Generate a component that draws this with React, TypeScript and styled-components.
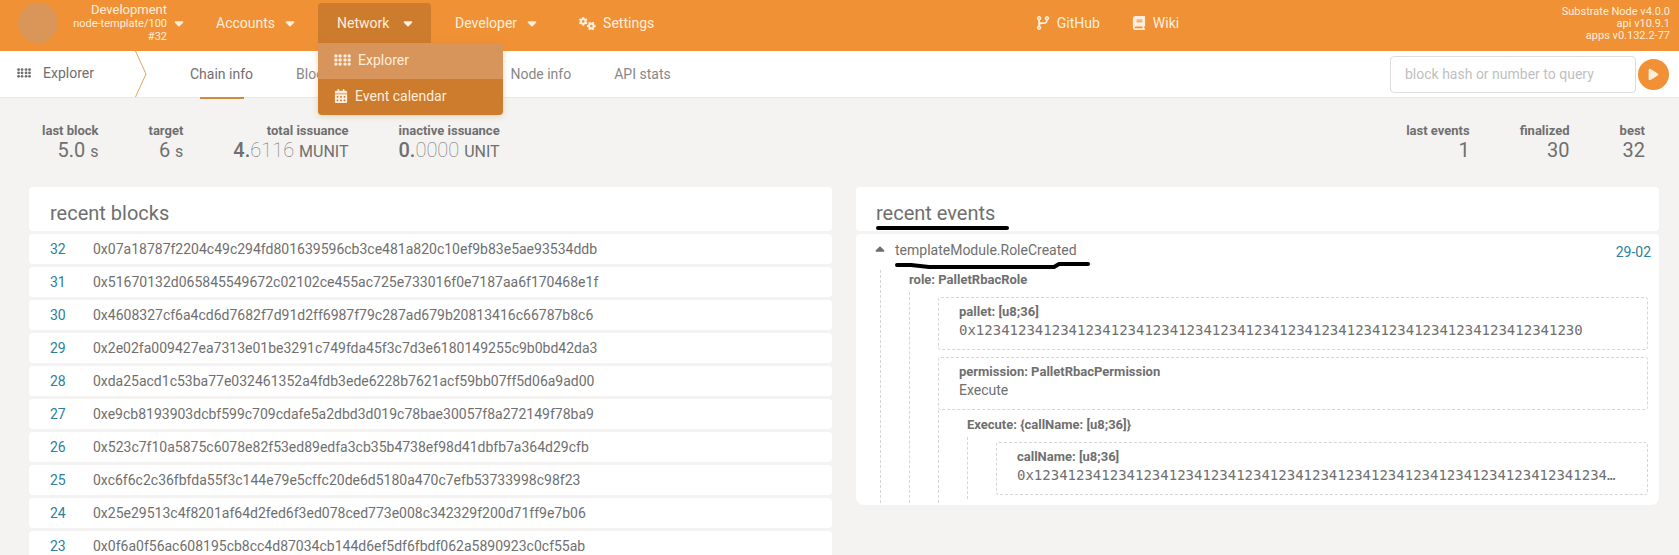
import React from "react";
import styled, { createGlobalStyle } from "styled-components";
import {
  FaBook,
  FaCalendarDays,
  FaCaretDown,
  FaCaretUp,
  FaCodeBranch,
  FaGears,
  FaPlay,
} from "react-icons/fa6";

const orange = "#f19135";
const orangeDark = "#cd7b2d";
const text = "#6f6f6f";
const link = "#2d7f9d";
const cream = "#ffeedd";
const dash = "#d6d6d6";

const GlobalStyle = createGlobalStyle`
  * { box-sizing: border-box; }
  html { background: #f4f3f1; }
  body {
    margin: 0;
    overflow: hidden;
    color: ${text};
    font: 14px/20px Roboto, "Open Sans", sans-serif;
  }
  button, input { font: inherit; color: inherit; }
  a { color: inherit; text-decoration: none; }
`;

const Header = styled.header`
  display: flex;
  align-items: flex-start;
  height: 51px;
  padding: 3px 9px 0 18px;
  background: ${orange};
  color: ${cream};
`;

const ChainButton = styled.button`
  display: flex;
  align-items: center;
  gap: 5px;
  width: 168px;
  padding: 0;
  border: 0;
  background: none;
  text-align: right;
`;

const ChainLogo = styled.span`
  width: 40px;
  height: 40px;
  border-radius: 50%;
  background: #da9658;
`;

const ChainInfo = styled.span`
  display: flex;
  flex: 1;
  flex-direction: column;
  font-size: 11px;
  line-height: 13px;
`;

const ChainName = styled.span`
  margin-bottom: 1px;
  font-size: 13px;
`;

const Menu = styled.nav`
  display: flex;
  gap: 5px;
  margin-left: 11px;
`;

const MenuGroup = styled.div`
  position: relative;
`;

const MenuButton = styled.button<{ $open?: boolean }>`
  display: flex;
  align-items: center;
  justify-content: space-between;
  gap: 8px;
  min-width: 113px;
  height: 40px;
  padding: 0 16px 0 19px;
  border: 0;
  border-radius: 4px 4px 0 0;
  background: ${(p) => (p.$open ? orangeDark : "transparent")};
`;

const MenuLink = styled.a`
  display: flex;
  align-items: center;
  gap: 7px;
  height: 40px;
  padding: 0 13px 0 19px;
`;

const Dropdown = styled.div`
  position: absolute;
  z-index: 2;
  top: 100%;
  left: 0;
  width: 185px;
  overflow: hidden;
  border-radius: 0 0 4px 4px;
  background: ${orangeDark};
  box-shadow: 0 1px 6px rgba(205, 123, 45, 0.3);
`;

const DropdownItem = styled.a<{ $active?: boolean }>`
  display: flex;
  align-items: center;
  gap: 7px;
  height: 36px;
  padding: 0 16px 2px;
  background: ${(p) => (p.$active ? "#d7955b" : "transparent")};
`;

const ExternalLinks = styled.nav`
  display: flex;
  flex: 1;
  justify-content: center;
  padding-right: 20px;
`;

const Versions = styled.div`
  display: flex;
  flex-direction: column;
  padding-top: 3px;
  font-size: 11px;
  line-height: 12px;
  text-align: right;
`;

const TabBar = styled.div`
  display: flex;
  align-items: stretch;
  height: 47px;
  padding: 0 10px 0 17px;
  border-bottom: 1px solid #e8e7e6;
  background: #fff;
`;

const Section = styled.div`
  display: flex;
  align-items: center;
  gap: 12px;
  width: 118px;
  padding-bottom: 2px;
`;

const Tabs = styled.nav`
  display: flex;
  flex: 1;
  gap: 1px;
  padding-left: 22px;
`;

const Tab = styled.a<{ $active?: boolean }>`
  display: flex;
  flex-direction: column;
  justify-content: center;
  position: relative;
  padding: 0 21px;
  color: ${(p) => (p.$active ? text : "#878787")};

  &::after {
    content: "";
    display: ${(p) => (p.$active ? "block" : "none")};
    position: absolute;
    bottom: -2px;
    left: 50%;
    width: 44px;
    height: 2px;
    margin-left: -22px;
    background: #d08b43;
  }
`;

const Search = styled.form`
  display: flex;
  align-items: center;
  gap: 2px;
`;

const SearchInput = styled.input`
  width: 246px;
  height: 37px;
  padding: 0 14px;
  border: 1px solid #dddddd;
  border-radius: 4px;
  outline: 0;
  background: #fff;

  &::placeholder { color: #bfbfbf; }
`;

const SearchButton = styled.button`
  display: flex;
  align-items: center;
  justify-content: center;
  width: 31px;
  height: 31px;
  padding: 0;
  border: 0;
  border-radius: 50%;
  background: ${orange};
  color: ${cream};
`;

const Stats = styled.section`
  display: flex;
  justify-content: space-between;
  padding: 24px 34px 0 42px;
`;

const StatGroup = styled.dl`
  display: flex;
  gap: 50px;
  margin: 0;
`;

const Stat = styled.div`
  text-align: right;
`;

const StatLabel = styled.dt`
  font-size: 13px;
  font-weight: 700;
  line-height: 18px;
`;

const StatValue = styled.dd`
  margin: 0;
  font-size: 20px;
  line-height: 20px;
`;

const Whole = styled.span`
  font-weight: 500;
`;

const Decimals = styled.span`
  font-weight: 100;
`;

const Unit = styled.span`
  font-size: 16px;
`;

const Columns = styled.main`
  display: grid;
  grid-template-columns: repeat(2, minmax(0, 1fr));
  align-items: start;
  gap: 24px;
  padding: 25px 20px 0 29px;
`;

const BlockTable = styled.table`
  width: 100%;
  margin: -3px 0;
  border-collapse: separate;
  border-spacing: 0 3px;
`;

const TableTitle = styled.th`
  height: 44px;
  padding: 7px 21px 0;
  border-radius: 4px;
  background: #fff;
  font-size: 20px;
  font-weight: 400;
  line-height: 24px;
  text-align: left;
`;

const BlockNumber = styled.td`
  width: 64px;
  height: 30px;
  padding: 0 0 0 21px;
  border-radius: 4px 0 0 4px;
  background: #fff;
  color: ${link};
`;

const BlockHash = styled.td`
  padding: 0;
  border-radius: 0 4px 4px 0;
  background: #fff;
`;

const EventPanel = styled.section`
  display: flex;
  flex-direction: column;
  gap: 3px;
`;

const EventTitle = styled.h2`
  position: relative;
  height: 44px;
  margin: 0;
  padding: 14px 20px 0;
  border-radius: 4px;
  background: #fff;
  font-size: 20px;
  font-weight: 400;
  line-height: 24px;
`;

const EventBody = styled.div`
  padding: 6px 11px 2px 21px;
  border-radius: 4px 4px 8px 8px;
  background: #fff;
`;

const EventHeader = styled.div`
  display: flex;
  justify-content: space-between;
  position: relative;
  height: 30px;
  margin: 0 -3px 0 -4px;
`;

const EventToggle = styled.button`
  display: flex;
  align-items: flex-start;
  gap: 8px;
  padding: 0;
  border: 0;
  background: none;

  svg { margin-top: 3px; }
`;

const EventTime = styled.a`
  padding-top: 2px;
  color: ${link};
`;

const TitleMark = styled.svg`
  position: absolute;
  top: 36px;
  left: 19px;
`;

const NameMark = styled.svg`
  position: absolute;
  top: 21px;
  left: 20px;
`;

const Tree = styled.div`
  margin-left: 3px;
  padding-left: 28px;
  border-left: 1px dashed ${dash};
`;

const Branch = styled.div`
  padding: 5px 0 0 28px;
  border-left: 1px dashed ${dash};
`;

const Items = styled.div`
  display: flex;
  flex-direction: column;
`;

const NodeLabel = styled.div`
  height: 22px;
  font-size: 13px;
  font-weight: 700;
  line-height: 20px;
`;

const Param = styled.div`
  height: 53px;
  padding: 5px 26px 0 20px;
  border: 1px dashed ${dash};
  border-radius: 3px;

  & + & { margin-top: 7px; }
`;

const ParamLabel = styled.div`
  font-size: 13px;
  font-weight: 700;
  line-height: 18px;
`;

const ParamValue = styled.div<{ $mono?: boolean }>`
  overflow: hidden;
  font-family: ${(p) => (p.$mono ? '"DejaVu Sans Mono", monospace' : "inherit")};
  line-height: 18px;
  text-overflow: ellipsis;
  white-space: nowrap;
`;

const Variant = styled.div`
  padding: 5px 0 4px 28px;
  border-left: 1px dashed ${dash};
`;

const VariantBranch = styled(Branch)`
  padding-bottom: 4px;
`;

function BrailleIcon({ width }: { width: number }) {
  return (
    <svg width={width} height={(width * 12) / 17} viewBox="0 0 17 12" fill="currentColor" aria-hidden="true">
      {[1.9, 6.1, 11, 15.2].map((x) =>
        [1.9, 6, 10.1].map((y) => <circle key={`${x}-${y}`} cx={x} cy={y} r={1.7} />),
      )}
    </svg>
  );
}

function Chevron() {
  return (
    <svg width="12" height="46" viewBox="0 0 12 46" fill="none" stroke="#dca662" aria-hidden="true">
      <path d="M0.5 0L11 23L0.5 46" />
    </svg>
  );
}

const blocks: [number, string][] = [
  [32, "0x07a18787f2204c49c294fd801639596cb3ce481a820c10ef9b83e5ae93534ddb"],
  [31, "0x51670132d065845549672c02102ce455ac725e733016f0e7187aa6f170468e1f"],
  [30, "0x4608327cf6a4cd6d7682f7d91d2ff6987f79c287ad679b20813416c66787b8c6"],
  [29, "0x2e02fa009427ea7313e01be3291c749fda45f3c7d3e6180149255c9b0bd42da3"],
  [28, "0xda25acd1c53ba77e032461352a4fdb3ede6228b7621acf59bb07ff5d06a9ad00"],
  [27, "0xe9cb8193903dcbf599c709cdafe5a2dbd3d019c78bae30057f8a272149f78ba9"],
  [26, "0x523c7f10a5875c6078e82f53ed89edfa3cb35b4738ef98d41dbfb7a364d29cfb"],
  [25, "0xc6f6c2c36fbfda55f3c144e79e5cffc20de6d5180a470c7efb53733998c98f23"],
  [24, "0x25e29513c4f8201af64d2fed6f3ed078ced773e008c342329f200d71ff9e7b06"],
  [23, "0x0f6a0f56ac608195cb8cc4d87034cb144d6ef5df6fbdf062a5890923c0cf55ab"],
];

const bytes = `0x${"1234".repeat(17)}1230`;

export default function App() {
  return (
    <>
      <GlobalStyle />
      <Header>
        <ChainButton>
          <ChainLogo />
          <ChainInfo>
            <ChainName>Development</ChainName>
            <span>node-template/100</span>
            <span>#32</span>
          </ChainInfo>
          <FaCaretDown />
        </ChainButton>
        <Menu>
          <MenuButton>Accounts <FaCaretDown /></MenuButton>
          <MenuGroup>
            <MenuButton $open aria-expanded="true">Network <FaCaretDown /></MenuButton>
            <Dropdown>
              <DropdownItem href="#explorer" $active><BrailleIcon width={17} />Explorer</DropdownItem>
              <DropdownItem href="#calendar"><FaCalendarDays />Event calendar</DropdownItem>
            </Dropdown>
          </MenuGroup>
          <MenuButton>Developer <FaCaretDown /></MenuButton>
          <MenuLink href="#settings"><FaGears size={17} />Settings</MenuLink>
        </Menu>
        <ExternalLinks>
          <MenuLink href="#github"><FaCodeBranch />GitHub</MenuLink>
          <MenuLink href="#wiki"><FaBook />Wiki</MenuLink>
        </ExternalLinks>
        <Versions>
          <span>Substrate Node v4.0.0</span>
          <span>api v10.9.1</span>
          <span>apps v0.132.2-77</span>
        </Versions>
      </Header>

      <TabBar>
        <Section><BrailleIcon width={14} />Explorer</Section>
        <Chevron />
        <Tabs>
          <Tab href="#chain" $active>Chain info</Tab>
          <Tab href="#block">Block details</Tab>
          <Tab href="#latency">Latency</Tab>
          <Tab href="#node">Node info</Tab>
          <Tab href="#api">API stats</Tab>
        </Tabs>
        <Search onSubmit={(e) => e.preventDefault()}>
          <SearchInput aria-label="Block query" placeholder="block hash or number to query" />
          <SearchButton aria-label="Run query"><FaPlay size={13} /></SearchButton>
        </Search>
      </TabBar>

      <Stats>
        <StatGroup>
          <Stat><StatLabel>last block</StatLabel><StatValue>5.0 <Unit>s</Unit></StatValue></Stat>
          <Stat><StatLabel>target</StatLabel><StatValue>6 <Unit>s</Unit></StatValue></Stat>
          <Stat>
            <StatLabel>total issuance</StatLabel>
            <StatValue><Whole>4.</Whole><Decimals>6116</Decimals> <Unit>MUNIT</Unit></StatValue>
          </Stat>
          <Stat>
            <StatLabel>inactive issuance</StatLabel>
            <StatValue><Whole>0.</Whole><Decimals>0000</Decimals> <Unit>UNIT</Unit></StatValue>
          </Stat>
        </StatGroup>
        <StatGroup>
          <Stat><StatLabel>last events</StatLabel><StatValue>1</StatValue></Stat>
          <Stat><StatLabel>finalized</StatLabel><StatValue>30</StatValue></Stat>
          <Stat><StatLabel>best</StatLabel><StatValue>32</StatValue></Stat>
        </StatGroup>
      </Stats>

      <Columns>
        <BlockTable>
          <thead>
            <tr><TableTitle colSpan={2}>recent blocks</TableTitle></tr>
          </thead>
          <tbody>
            {blocks.map(([number, hash]) => (
              <tr key={number}>
                <BlockNumber><a href={`#${number}`}>{number}</a></BlockNumber>
                <BlockHash>{hash}</BlockHash>
              </tr>
            ))}
          </tbody>
        </BlockTable>

        <EventPanel>
          <EventTitle>
            recent events
            <TitleMark width="136" height="10" fill="none" stroke="#000" strokeWidth="4" strokeLinecap="round" strokeLinejoin="round">
              <path d="M3 5H132" />
            </TitleMark>
          </EventTitle>
          <EventBody>
            <EventHeader>
              <EventToggle aria-expanded="true"><FaCaretUp />templateModule.RoleCreated</EventToggle>
              <EventTime href="#29">29-02</EventTime>
              <NameMark width="200" height="10" fill="none" stroke="#000" strokeWidth="4" strokeLinecap="round" strokeLinejoin="round">
                <path d="M4 4H18L36 6H161L166 3H195" />
              </NameMark>
            </EventHeader>
            <Tree>
              <NodeLabel>role: PalletRbacRole</NodeLabel>
              <Branch>
                <Items>
                  <Param>
                    <ParamLabel>pallet: [u8;36]</ParamLabel>
                    <ParamValue $mono>{bytes}</ParamValue>
                  </Param>
                  <Param>
                    <ParamLabel>permission: PalletRbacPermission</ParamLabel>
                    <ParamValue>Execute</ParamValue>
                  </Param>
                  <Variant>
                    <NodeLabel>{"Execute: {callName: [u8;36]}"}</NodeLabel>
                    <VariantBranch>
                      <Param>
                        <ParamLabel>callName: [u8;36]</ParamLabel>
                        <ParamValue $mono>{bytes}</ParamValue>
                      </Param>
                    </VariantBranch>
                  </Variant>
                </Items>
              </Branch>
            </Tree>
          </EventBody>
        </EventPanel>
      </Columns>
    </>
  );
}
